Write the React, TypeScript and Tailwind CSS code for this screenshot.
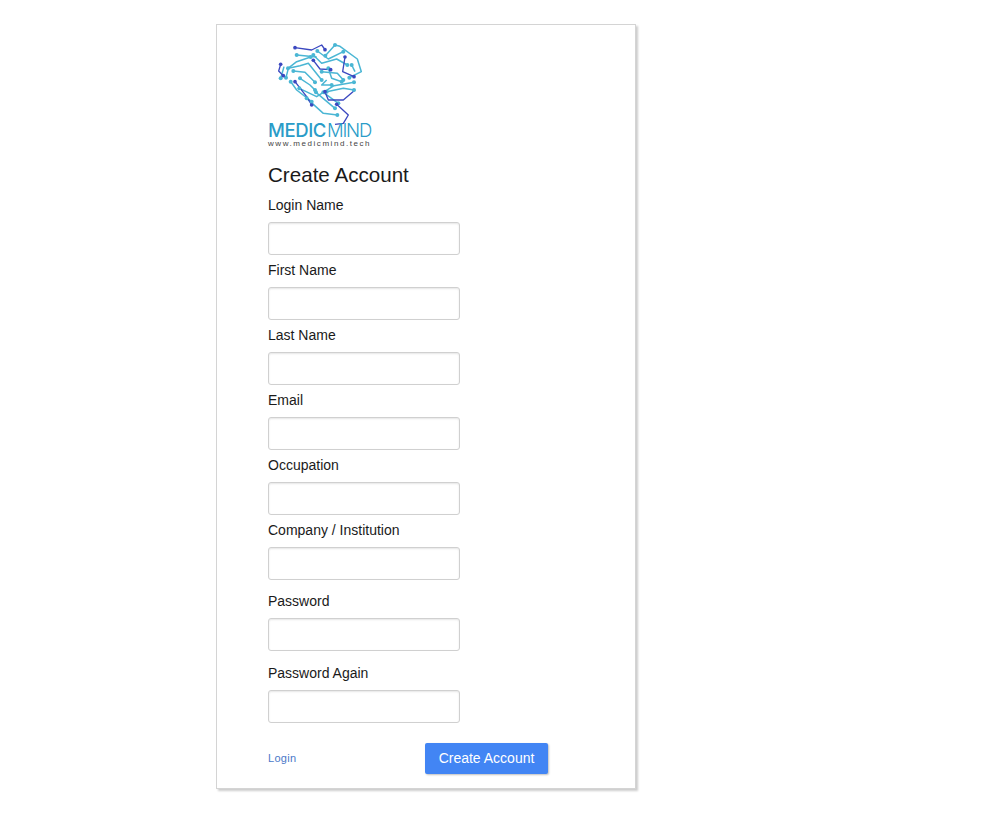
import React from 'react';

const fields = [
  { label: 'Login Name', extra: 'mt-0' },
  { label: 'First Name', extra: 'mt-0' },
  { label: 'Last Name', extra: 'mt-0' },
  { label: 'Email', extra: 'mt-0' },
  { label: 'Occupation', extra: 'mt-0' },
  { label: 'Company / Institution', extra: 'mt-0' },
  { label: 'Password', extra: 'mt-[6px]' },
  { label: 'Password Again', extra: 'mt-[7px]' },
];

const light = '#4ab6d4';
const dark = '#3b48c0';

// traces of the brain logo, in zoom pixels of the crop
const lightTraces = [
  'M196 62 L225 30 L240 34 L292 72 L304 110 L268 128',
  'M160 60 L185 85 L230 72 L262 90',
  'M172 48 L205 72 L250 50',
  'M84 100 L110 80 L152 66',
  'M78 128 L85 100 L120 92 L145 85 L185 135',
  'M100 108 L135 112 L165 142',
  'M120 130 L150 150 L165 165',
  'M118 160 L170 185 L222 152 L282 142',
  'M92 140 L110 165 L155 200',
  'M185 110 L232 115 L250 135',
  'M200 170 L250 160 L282 165',
  'M140 190 L190 235 L232 240',
  'M168 172 L225 220',
  'M190 172 L235 205',
  'M205 100 L215 130 L245 140',
  'M200 135 L185 150 L215 150',
  'M110 60 L170 66',
  'M275 90 L285 110',
  'M72 95 L62 130',
];

const darkTraces = [
  'M62 88 L56 108 L70 122',
  'M105 38 L155 45 L185 30 L195 44',
  'M160 76 L180 102 L212 104',
  'M255 66 L248 110 L282 125',
  'M105 140 L140 185 L155 210',
  'M195 170 L205 195 L250 195 L285 165',
  'M230 208 L265 240 L250 265 L225 268',
];

const lightDots = [
  [196, 62], [225, 30], [268, 128], [160, 60], [262, 90], [172, 48], [250, 50], [84, 100], [152, 66], [78, 128],
  [185, 135], [100, 108], [165, 142], [120, 130], [165, 165], [118, 160], [282, 142], [92, 140], [155, 200], [185, 110],
  [250, 135], [200, 170], [282, 165], [140, 190], [232, 240], [168, 172], [225, 220], [190, 172], [235, 205], [205, 100],
  [245, 140], [215, 150], [110, 60], [275, 90], [62, 130],
];

const darkDots = [
  [62, 88], [70, 122], [105, 38], [195, 44], [160, 76], [212, 104], [255, 66], [282, 125], [105, 140], [155, 210], [195, 170],
  [230, 208],
];

const BrainLogo = () => (
  <svg width="120" height="90" viewBox="0 0 360 270" fill="none" className="block">
    {lightTraces.map((d, i) => (
      <path key={i} d={d} stroke={light} strokeWidth="4.5" strokeLinejoin="round" />
    ))}
    {darkTraces.map((d, i) => (
      <path key={i} d={d} stroke={dark} strokeWidth="4" strokeLinejoin="round" />
    ))}
    {lightDots.map(([x, y], i) => (
      <circle key={i} cx={x} cy={y} r="6" fill={light} />
    ))}
    {darkDots.map(([x, y], i) => (
      <circle key={i} cx={x} cy={y} r="5.5" fill={dark} />
    ))}
  </svg>
);

const App = () => {
  return (
    <div className="w-[1000px] h-[828px] bg-white pt-[24px] pl-[216px] font-['Liberation_Sans',Arial,sans-serif] text-[#1a1a1a]">
      <div className="w-[420px] h-[765px] bg-white border border-[#d4d4d4] shadow-[2px_2px_2px_rgba(0,0,0,0.2)] flex flex-col pl-[51px]">
        <div className="-ml-[8px] mt-[10px]">
          <BrainLogo />
        </div>
        <div className="mt-[-3px] h-[16px] leading-[16px] whitespace-nowrap flex items-center text-[18.5px] font-['Inter',sans-serif]">
          <span className="font-medium text-[#2a9cc8] w-[59px] tracking-[-0.4px]">MEDIC</span>
          <span className="font-light text-[#2a9cc8] tracking-[-1.2px]">MIND</span>
        </div>
        <div className="text-[8px] leading-[8px] mt-[2px] h-[8px] tracking-[1.55px] text-[#444] whitespace-nowrap">www.medicmind.tech</div>

        <h1 className="text-[20.6px] leading-[24px] mt-[15px] font-normal">Create Account</h1>

        <div className="flex flex-col mt-[7px]">
          {fields.map((f) => (
            <div key={f.label} className={`flex flex-col ${f.extra}`}>
              <label className="text-[14px] leading-[20px] h-[20px] mb-[7px] mt-[1px]">{f.label}</label>
              <input
                type={f.label.startsWith('Password') ? 'password' : 'text'}
                className="w-[192px] h-[33px] bg-white border border-[#d0d0d0] rounded-[3px] shadow-[inset_0_1px_2px_rgba(0,0,0,0.1)] mb-[4px]"
              />
            </div>
          ))}
        </div>

        <div className="flex items-center mt-[16px] w-[280px]">
          <a className="text-[11px] text-[#4a78c8] tracking-[0.3px] w-[157px]">Login</a>
          <button className="w-[123px] h-[31px] bg-[#4285f4] text-white text-[14px] rounded-[2px] shadow-[1px_1px_2px_rgba(0,0,0,0.25)]">
            Create Account
          </button>
        </div>
      </div>
    </div>
  );
};

export default App;
